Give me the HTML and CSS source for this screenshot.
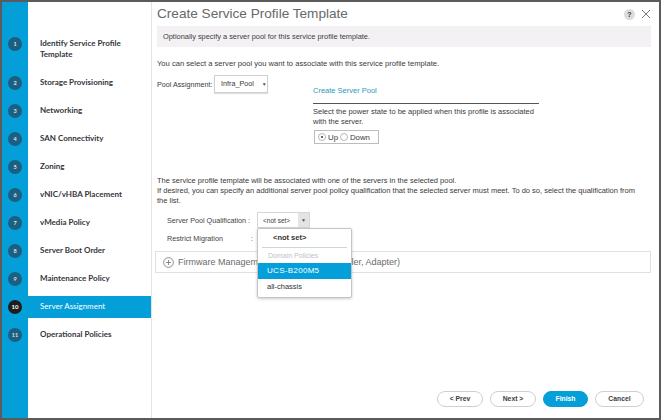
FILE: index.html
```html
<!DOCTYPE html>
<html>
<head>
<meta charset="utf-8">
<link rel="stylesheet" href="styles.css">
</head>
<body>
<div class="window">
  <aside class="sidebar">
    <ol class="steps">
      <li class="step"><span class="num">1</span><span class="label">Identify Service Profile<br>Template</span></li>
      <li class="step"><span class="num">2</span><span class="label">Storage Provisioning</span></li>
      <li class="step"><span class="num">3</span><span class="label">Networking</span></li>
      <li class="step"><span class="num">4</span><span class="label">SAN Connectivity</span></li>
      <li class="step"><span class="num">5</span><span class="label">Zoning</span></li>
      <li class="step"><span class="num">6</span><span class="label">vNIC/vHBA Placement</span></li>
      <li class="step"><span class="num">7</span><span class="label">vMedia Policy</span></li>
      <li class="step"><span class="num">8</span><span class="label">Server Boot Order</span></li>
      <li class="step"><span class="num">9</span><span class="label">Maintenance Policy</span></li>
      <li class="step active"><span class="num">10</span><span class="label">Server Assignment</span></li>
      <li class="step"><span class="num">11</span><span class="label">Operational Policies</span></li>
    </ol>
  </aside>
  <main class="main">
    <header class="head">
      <h1 class="title">Create Service Profile Template</h1>
      <div class="tools">
        <span class="help">?</span>
        <svg class="close" viewBox="0 0 10 10" width="10" height="10"><path d="M1 1 L9 9 M9 1 L1 9" stroke="#7a7a7a" stroke-width="1" fill="none"/></svg>
      </div>
    </header>
    <div class="banner">Optionally specify a server pool for this service profile template.</div>
    <p class="intro">You can select a server pool you want to associate with this service profile template.</p>
    <div class="pool-row">
      <div class="pool-left">
        <span class="pool-label">Pool Assignment:</span>
        <span class="select">Infra_Pool <span class="caret">▼</span></span>
      </div>
      <div class="pool-right">
        <a class="link">Create Server Pool</a>
        <div class="rule"></div>
        <p class="power">Select the power state to be applied when this profile is associated<br>with the server.</p>
        <div class="radios">
          <span class="radio on"></span><span class="rlabel">Up</span>
          <span class="radio"></span><span class="rlabel">Down</span>
        </div>
      </div>
    </div>
    <p class="desc">The service profile template will be associated with one of the servers in the selected pool.<br>If desired, you can specify an additional server pool policy qualification that the selected server must meet. To do so, select the qualification from<br>the list.</p>
    <div class="form-row spq">
      <span class="flabel">Server Pool Qualification :</span>
      <div class="select2">
        <span class="sval">&lt;not set&gt;</span><span class="arrowbox">▼</span>
        <ul class="dropdown">
          <li class="opt bold">&lt;not set&gt;</li>
          <li class="opt group">Domain Policies</li>
          <li class="opt sel">UCS-B200M5</li>
          <li class="opt">all-chassis</li>
        </ul>
      </div>
    </div>
    <div class="form-row rm">
      <span class="flabel">Restrict Migration</span><span class="colon">:</span>
    </div>
    <div class="panel">
      <svg class="plus" viewBox="0 0 12 12" width="11" height="11"><circle cx="6" cy="6" r="5.3" fill="none" stroke="#777" stroke-width="0.9"/><path d="M6 3.2 V8.8 M3.2 6 H8.8" stroke="#777" stroke-width="0.9"/></svg>
      <span>Firmware Management (BIOS, Disk Controller, Adapter)</span>
    </div>
    <footer class="buttons">
      <button class="btn">&lt; Prev</button>
      <button class="btn">Next &gt;</button>
      <button class="btn primary">Finish</button>
      <button class="btn">Cancel</button>
    </footer>
  </main>
</div>
</body>
</html>
```
FILE: styles.css
```css
body {
  margin: 0;
  font-family: "Liberation Sans", Arial, sans-serif;
  background: #fff;
}
.window {
  width: 661px;
  height: 420px;
  box-sizing: border-box;
  border: 2px solid #5b5b5b;
  display: flex;
  background: #fff;
  overflow: hidden;
}
.sidebar {
  width: 149px;
  flex: none;
  background: linear-gradient(to right, #049fd9 26px, #fff 26px);
  border-right: 1px solid #e3e3e3;
}
.steps {
  list-style: none;
  margin: 0;
  padding: 31px 0 0;
}
.step {
  display: flex;
  align-items: flex-start;
  padding: 5px 0 6px;
  margin-bottom: 6px;
  font: 700 8px/11px Lato, "Liberation Sans", sans-serif;
  color: #34363b;
}
.num {
  width: 14px;
  height: 14px;
  margin: -1.5px 6px -1.5px;
  flex: none;
  border-radius: 50%;
  background: #1c5f80;
  color: #d8e8f0;
  font: 700 5.5px/14px Lato, sans-serif;
  text-align: center;
}
.label {
  padding-left: 12px;
}
.step.active {
  background: #049fd9;
  color: #fff;
  font-weight: 400;
}
.step.active .num {
  background: #1e1e1e;
  color: #fff;
  font-size: 6px;
}
.main {
  flex: 1;
  display: flex;
  flex-direction: column;
  padding: 0 8px 0 5px;
  color: #3a3a3a;
  position: relative;
}
.head {
  height: 24px;
  display: flex;
  align-items: center;
  justify-content: space-between;
}
.title {
  margin: 0;
  font-weight: 400;
  font-size: 13.6px;
  line-height: 16px;
  color: #67686b;
}
.tools {
  display: flex;
  align-items: center;
  gap: 6px;
}
.help {
  width: 11px;
  height: 11px;
  border-radius: 50%;
  background: #dcdcdc;
  color: #333;
  font: 700 7px/11px "Liberation Sans", sans-serif;
  text-align: center;
}
.close {
  display: block;
}
.banner {
  height: 21px;
  background: #f3f1f4;
  padding-left: 6px;
  font-size: 7.4px;
  line-height: 21px;
  color: #3c3c3c;
}
.intro {
  margin: 12px 0 0;
  font-size: 7.6px;
  line-height: 10px;
}
.pool-row {
  display: flex;
  margin-top: 6px;
}
.pool-left {
  width: 156px;
  flex: none;
  display: flex;
  align-items: center;
  height: 18px;
}
.pool-label {
  width: 57px;
  font-size: 7.2px;
}
.select {
  width: 54px;
  height: 18px;
  box-sizing: border-box;
  border: 1px solid #cfcfcf;
  box-shadow: 0 1px 1px rgba(0,0,0,0.12);
  font-size: 7.2px;
  line-height: 16px;
  padding-left: 6px;
  display: flex;
  gap: 8px;
}
.caret {
  color: #2e5c8a;
  font-size: 5px;
}
.pool-right {
  width: 226px;
  padding-top: 11px;
}
.link {
  display: block;
  color: #2a9ab8;
  font-size: 7.5px;
  line-height: 10px;
}
.rule {
  margin-top: 7px;
  border-top: 1px solid #555;
}
.power {
  margin: 3px 0 0;
  font-size: 7.5px;
  line-height: 10px;
}
.radios {
  margin-top: 3px;
  margin-left: 1px;
  width: 65px;
  height: 14px;
  box-sizing: border-box;
  border: 1px solid #bdbdbd;
  display: flex;
  align-items: center;
  padding-left: 3px;
  font-size: 7.8px;
}
.radio {
  width: 8px;
  height: 8px;
  box-sizing: border-box;
  border: 1px solid #b8b8b8;
  border-radius: 50%;
  margin-right: 2px;
  position: relative;
  flex: none;
}
.radio.on::after {
  content: "";
  position: absolute;
  left: 2px;
  top: 2px;
  width: 2px;
  height: 2px;
  border-radius: 50%;
  background: #333;
}
.rlabel {
  margin-right: 2px;
}
.desc {
  margin: 32px 0 0;
  font-size: 7.5px;
  line-height: 10px;
}
.form-row {
  display: flex;
  align-items: center;
  padding-left: 10px;
  font-size: 7.2px;
}
.spq {
  margin-top: 6px;
  height: 16px;
}
.rm {
  margin-top: 3px;
  height: 14px;
}
.flabel {
  width: 84px;
  color: #444;
}
.colon {
  width: 6px;
}
.spq .flabel {
  width: 90px;
}
.select2 {
  position: relative;
  width: 53px;
  height: 16px;
  box-sizing: border-box;
  border: 1px solid #d6d6d6;
  display: flex;
  align-items: center;
  justify-content: space-between;
  padding-left: 5px;
}
.sval {
  font-size: 6.5px;
}
.arrowbox {
  width: 11px;
  height: 14px;
  background: #e4e4e4;
  color: #2e5c8a;
  font-size: 5px;
  line-height: 14px;
  text-align: center;
}
.dropdown {
  position: absolute;
  top: 15px;
  left: -1px;
  width: 93px;
  margin: 0;
  padding: 3px 0 2px;
  list-style: none;
  background: #fff;
  border: 1px solid #c4c4c4;
  border-radius: 2px;
  box-shadow: 0 1px 3px rgba(0,0,0,0.2);
  z-index: 2;
}
.opt {
  font-size: 7.5px;
  line-height: 16px;
  padding-left: 9px;
  color: #333;
}
.opt.bold {
  font-weight: 700;
  line-height: 12px;
  padding-left: 11px;
  margin: 0 4px;
  padding-bottom: 3px;
  border-bottom: 1px solid #c9d6dd;
}
.opt.group {
  color: #c2c2c2;
  line-height: 15px;
  font-size: 7px;
  padding-left: 10px;
}
.opt.sel {
  background: #049fd9;
  color: #fff;
  font-size: 8px;
  letter-spacing: 0.3px;
}
.panel {
  margin-top: 6px;
  margin-left: -2px;
  height: 22px;
  box-sizing: border-box;
  border: 1px solid #e0e0e0;
  display: flex;
  align-items: center;
  gap: 4px;
  padding-left: 7px;
  font-size: 9px;
  color: #6b6b6b;
}
.plus {
  display: block;
}
.buttons {
  margin-top: auto;
  margin-bottom: 11px;
  margin-right: 7px;
  display: flex;
  justify-content: flex-end;
  gap: 7px;
}
.btn {
  height: 16px;
  width: 46px;
  padding: 0;
  border: 1px solid #cfcfcf;
  border-radius: 8px;
  background: #fff;
  font: 700 6.8px/14px "Liberation Sans", sans-serif;
  color: #3d3d3d;
}
.btn.primary {
  width: 45px;
  background: #049fd9;
  border-color: #049fd9;
  color: #fff;
}
.btn:last-child {
  width: 49px;
}
```
